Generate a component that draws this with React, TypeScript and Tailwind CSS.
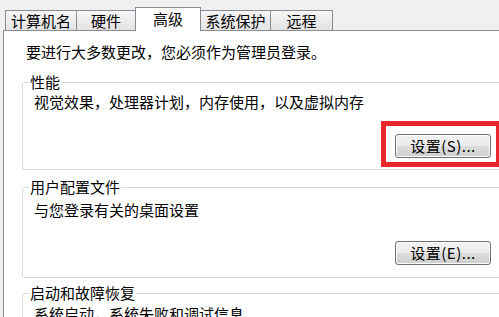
const Tab = ({ label, className }: { label: string; className: string }) => (
  <div
    className={`flex h-[20px] items-center justify-center border border-b-0 border-[#898c95] bg-linear-to-b from-[#f6f6f6] to-[#e3e3e3] pt-px ${className}`}
  >
    {label}
  </div>
);

const ActiveTab = ({ label, className }: { label: string; className: string }) => (
  <div
    className={`relative z-10 -mb-px flex h-[24px] items-center justify-center border border-b-0 border-[#898c95] bg-white pb-px ${className}`}
  >
    {label}
  </div>
);

const SetButton = ({ label }: { label: string }) => (
  <button className="h-[24px] w-[96px] rounded-[3px] border border-[#707070] bg-[linear-gradient(to_bottom,#f2f2f2_0%,#ebebeb_50%,#dddddd_51%,#cfcfcf_100%)] text-[15px] leading-[20px] tracking-[0.5px] text-black shadow-[inset_0_0_0_1px_#fcfcfc]">
    {label}
  </button>
);

export default function App() {
  return (
    <div className="h-[317px] w-[499px] overflow-hidden bg-[#f0f0f0] pl-[3px] font-['Noto_Sans_CJK_SC','Noto_Sans',sans-serif] text-[15px] text-black">
      <div className="flex h-[30px] items-end pl-[2px]">
        <Tab label="计算机名" className="w-[72px]" />
        <Tab label="硬件" className="-ml-px w-[60px]" />
        <ActiveTab label="高级" className="-ml-px w-[66px]" />
        <Tab label="系统保护" className="-ml-px w-[71px]" />
        <Tab label="远程" className="-ml-px w-[63px]" />
      </div>

      <div className="h-[300px] w-[530px] border border-[#898c95] bg-white">
        <p className="mt-[11px] pl-[22px] leading-[20px]">
          要进行大多数更改，您必须作为管理员登录。
        </p>

        <fieldset className="ml-[18px] mt-[12px] w-[500px] rounded-[3px] border border-[#d5d9dd] pb-[11px]">
          <legend className="ml-[6px] px-[1px] leading-[16px]">性能</legend>
          <p className="mt-[2px] pl-[11px] leading-[20px]">
            视觉效果，处理器计划，内存使用，以及虚拟内存
          </p>
          <div className="mt-[22px] flex justify-end pr-[30px]">
            <div className="relative">
              <SetButton label="设置(S)..." />
              <span className="pointer-events-none absolute -bottom-[9px] -left-[14px] -right-[10px] -top-[13px] border-[5px] border-[#e9262d]" />
            </div>
          </div>
        </fieldset>

        <fieldset className="ml-[18px] mt-[9px] w-[500px] rounded-[3px] border border-[#d5d9dd] pb-[12px]">
          <legend className="ml-[6px] px-[1px] leading-[16px]">用户配置文件</legend>
          <p className="mt-[5px] pl-[11px] leading-[20px]">与您登录有关的桌面设置</p>
          <div className="mt-[21px] flex justify-end pr-[30px]">
            <SetButton label="设置(E)..." />
          </div>
        </fieldset>

        <fieldset className="ml-[18px] mt-[7px] w-[500px] rounded-[3px] border border-[#d5d9dd] pb-[12px]">
          <legend className="ml-[6px] px-[1px] leading-[16px]">启动和故障恢复</legend>
          <p className="mt-[3px] pl-[11px] leading-[20px]">系统启动，系统失败和调试信息</p>
        </fieldset>
      </div>
    </div>
  );
}
